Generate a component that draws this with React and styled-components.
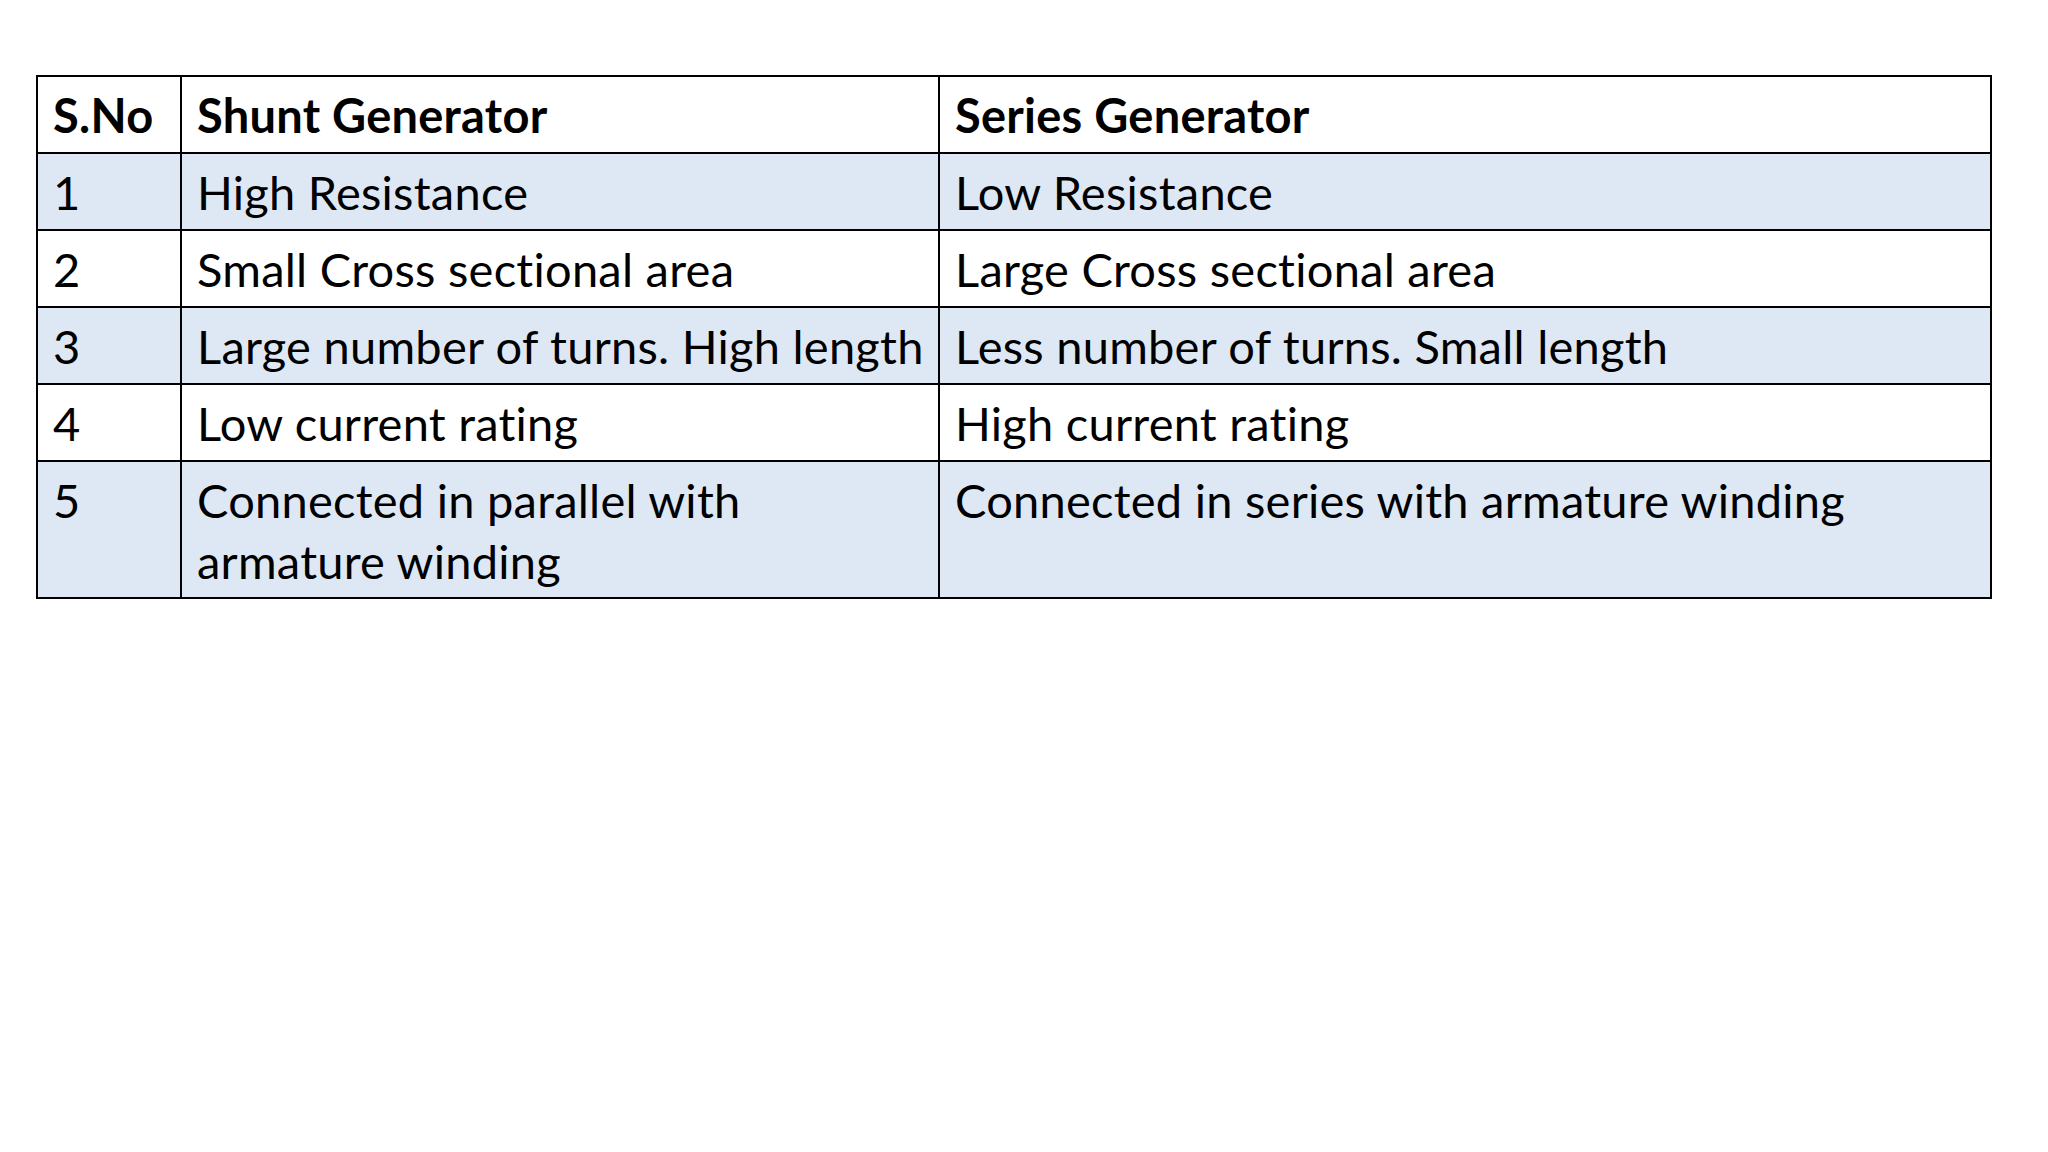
import React from "react";
import styled, { createGlobalStyle } from "styled-components";

const Global = createGlobalStyle`
  html, body { margin: 0; padding: 0; background: #ffffff; }
  body { width: 2048px; height: 1152px; overflow: hidden; font-family: "Lato", "Open Sans", sans-serif; }
`;

const Page = styled.main`
  width: 2048px;
  height: 1152px;
  box-sizing: border-box;
  padding: 75px 0 0 36px;
  background: #ffffff;
`;

const Table = styled.div`
  display: grid;
  grid-template-columns: 144px 758px 1050px;
  grid-template-rows: repeat(5, 77px) 135px;
  width: 1956px;
  box-sizing: border-box;
  border: 2px solid #000;
  font-family: "Lato", "Open Sans", sans-serif;
  font-size: 47px;
  letter-spacing: 0.25px;
  color: #000;
`;

const Row = styled.div`
  display: contents;
`;

const Cell = styled.div`
  box-sizing: border-box;
  padding: 8px 10px 0 15px;
  line-height: 61px;
  white-space: nowrap;
  background: ${(p) => (p.$band ? "#dee8f5" : "#ffffff")};
  font-weight: ${(p) => (p.$head ? 700 : 400)};
  border-right: ${(p) => (p.$lastCol ? "none" : "2px solid #000")};
  border-bottom: ${(p) => (p.$lastRow ? "none" : "2px solid #000")};
`;

const header = ["S.No", "Shunt Generator", "Series Generator"];

const rows = [
  ["1", ["High Resistance"], ["Low Resistance"]],
  ["2", ["Small Cross sectional area"], ["Large Cross sectional area"]],
  ["3", ["Large number of turns. High length"], ["Less number of turns. Small length"]],
  ["4", ["Low current rating"], ["High current rating"]],
  ["5", ["Connected in parallel with", "armature winding"], ["Connected in series with armature winding"]],
];

const Lines = ({ lines }) =>
  lines.map((l, i) => (
    <React.Fragment key={i}>
      {i > 0 && <br />}
      {l}
    </React.Fragment>
  ));

export default function App() {
  return (
    <>
      <Global />
      <Page>
        <Table role="table">
          <Row role="row">
            {header.map((h, j) => (
              <Cell key={j} role="columnheader" $head $lastCol={j === 2}>
                {h}
              </Cell>
            ))}
          </Row>
          {rows.map((r, i) => (
            <Row key={i} role="row">
              <Cell role="cell" $band={i % 2 === 0} $lastRow={i === rows.length - 1}>
                {r[0]}
              </Cell>
              <Cell role="cell" $band={i % 2 === 0} $lastRow={i === rows.length - 1}>
                <Lines lines={r[1]} />
              </Cell>
              <Cell role="cell" $band={i % 2 === 0} $lastRow={i === rows.length - 1} $lastCol>
                <Lines lines={r[2]} />
              </Cell>
            </Row>
          ))}
        </Table>
      </Page>
    </>
  );
}
